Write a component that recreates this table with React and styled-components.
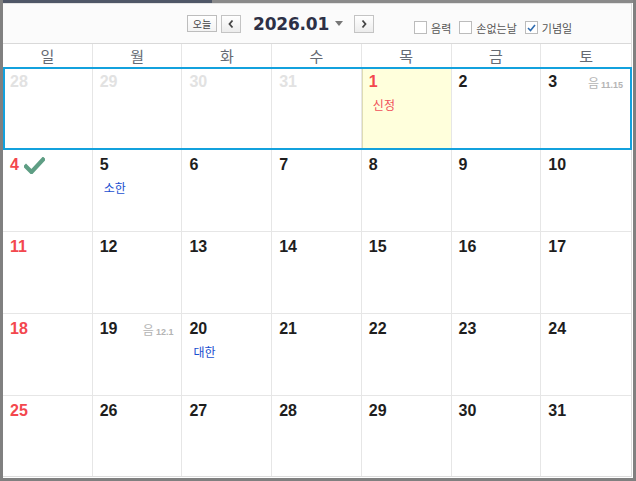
import styled, { createGlobalStyle } from "styled-components";

const GlobalStyle = createGlobalStyle`
  html, body {
    margin:0;
    padding:0;
    background:#fff;
    font-family:"Liberation Sans","Noto Sans CJK KR",sans-serif;
  }
`

const Frame = styled.div`
  box-sizing:border-box;
  width:636px;
  height:481px;
  display:flex;
  flex-direction:column;
  border:3px solid #808080;
  border-top:none;
  padding:0 1px 1px 0;
  background:#fff;
`

const TopStrip = styled.div`
  height:3px;
  margin-right:-1px;
  background:linear-gradient(to right, #4f5767 209px, #8a8a8a 209px);
`

const Inner = styled.div`
  flex:1;
  display:flex;
  flex-direction:column;
  border-right:1px solid #dcdcdc;
  border-bottom:1px solid #dcdcdc;
`

const Toolbar = styled.div`
  box-sizing:border-box;
  height:41px;
  display:flex;
  align-items:center;
  padding-left:184px;
  background:#fbfbfb;
  border-top:1px solid #e4e4e4;
  border-bottom:1px solid #d9d9d9;
`

const TodayButton = styled.button`
  box-sizing:border-box;
  width:30px;
  height:17px;
  padding:0;
  border:1px solid #bdbdbd;
  background:linear-gradient(#fff,#f3f3f3);
  font-family:"Noto Sans CJK KR",sans-serif;
  font-size:10px;
  line-height:14px;
  color:#444;
  margin-right:4px;
`

const ArrowButton = styled.button`
  box-sizing:border-box;
  width:20px;
  height:18px;
  padding:0;
  display:flex;
  align-items:center;
  justify-content:center;
  border:1px solid #c4c4c4;
  background:linear-gradient(#fff,#ececec);
  margin-left:${({$ml}) => $ml || 0}px;
`

const Title = styled.div`
  margin-left:12px;
  font-family:"DejaVu Sans",sans-serif;
  font-weight:bold;
  font-size:17px;
  color:#2d3046;
  letter-spacing:-0.2px;
`

const Caret = styled.span`
  margin-left:6px;
  width:0;
  height:0;
  border-left:4px solid transparent;
  border-right:4px solid transparent;
  border-top:5px solid #777;
`

const Options = styled.div`
  display:flex;
  align-items:center;
  gap:8px;
  margin-left:40px;
  margin-top:8px;
`

const Option = styled.label`
  display:flex;
  align-items:center;
  gap:4px;
  font-family:"Noto Sans CJK KR",sans-serif;
  font-size:11px;
  color:#555;
`

const Box = styled.span`
  box-sizing:border-box;
  width:13px;
  height:13px;
  border:1px solid #bcbcbc;
  background:#fff;
  display:flex;
  align-items:center;
  justify-content:center;
`

const DayNames = styled.div`
  box-sizing:border-box;
  height:23px;
  display:grid;
  grid-template-columns:repeat(7,1fr);
  background:#fff;
`

const DayName = styled.div`
  display:flex;
  align-items:center;
  justify-content:center;
  font-family:"Noto Sans CJK KR",sans-serif;
  font-size:15px;
  color:#656a73;
  border-right:${({$last}) => $last ? "none" : "1px solid #e6e6e6"};
`

const Week = styled.div`
  position:relative;
  height:${({$h}) => $h}px;
  flex:${({$fill}) => $fill ? 1 : "none"};
  display:grid;
  grid-template-columns:repeat(7,1fr);
  ${({$selected}) => $selected && `
    &::after {
      content:"";
      position:absolute;
      inset:0 -1px 0 0;
      border:2px solid #13a1dd;
      pointer-events:none;
    }
  `}
`

const Cell = styled.div`
  box-sizing:border-box;
  padding:6px 8px 0 7px;
  border-right:${({$last}) => $last ? "none" : "1px solid #e6e6e6"};
  border-bottom:${({$lastRow}) => $lastRow ? "none" : "1px solid #e6e6e6"};
  background:${({$today}) => $today ? "#ffffdc" : "#fff"};
  box-shadow:${({$today}) => $today ? "inset 1px 0 0 #dedcb4" : "none"};
`

const Head = styled.div`
  display:flex;
  align-items:center;
  justify-content:space-between;
`

const NumberWrap = styled.div`
  display:flex;
  align-items:center;
  gap:5px;
`

const Num = styled.span`
  font-weight:bold;
  font-size:16px;
  line-height:18px;
  color:${({$tone}) => $tone === "other" ? "#e2e2e2" : $tone === "sun" ? "#f3474e" : "#1e1e1e"};
`

const Lunar = styled.span`
  display:flex;
  align-items:baseline;
  gap:2px;
  color:#b4b4b4;
  font-family:"Noto Sans CJK KR",sans-serif;
  font-size:12px;
  b {
    font-family:"Liberation Sans",sans-serif;
    font-size:9px;
    font-weight:bold;
  }
`

const Label = styled.div`
  margin:5px 0 0 4px;
  font-family:"Noto Sans CJK KR",sans-serif;
  font-size:12px;
  color:${({$red}) => $red ? "#f0505a" : "#1a4fd0"};
`

const weeks = [
  [
    {d:28, tone:"other"}, {d:29, tone:"other"}, {d:30, tone:"other"}, {d:31, tone:"other"},
    {d:1, tone:"sun", today:true, label:"신정", red:true}, {d:2}, {d:3, lunar:"11.15"},
  ],
  [
    {d:4, tone:"sun", check:true}, {d:5, label:"소한"}, {d:6}, {d:7}, {d:8}, {d:9}, {d:10},
  ],
  [
    {d:11, tone:"sun"}, {d:12}, {d:13}, {d:14}, {d:15}, {d:16}, {d:17},
  ],
  [
    {d:18, tone:"sun"}, {d:19, lunar:"12.1"}, {d:20, label:"대한"}, {d:21}, {d:22}, {d:23}, {d:24},
  ],
  [
    {d:25, tone:"sun"}, {d:26}, {d:27}, {d:28}, {d:29}, {d:30}, {d:31},
  ],
]

const names = ["일","월","화","수","목","금","토"]

const Chevron = ({dir}) => (
  <svg width="8" height="10" viewBox="0 0 8 10">
    <path
      d={dir === "left" ? "M5.5 1.5 L2.5 5 L5.5 8.5" : "M2.5 1.5 L5.5 5 L2.5 8.5"}
      fill="none"
      stroke="#444"
      strokeWidth="1.8"
    />
  </svg>
)

const Check = () => (
  <svg width="21" height="17" viewBox="0 0 21 17">
    <path d="M2 9.5 L7.5 15 L19 2.5" fill="none" stroke="#5e9e84" strokeWidth="4.2" strokeLinecap="square" />
  </svg>
)

const CheckOption = ({label, checked}) => (
  <Option>
    <Box>
      {checked && (
        <svg width="9" height="8" viewBox="0 0 9 8">
          <path d="M1 4 L3.5 6.5 L8 1" fill="none" stroke="#2f6cb0" strokeWidth="1.6" />
        </svg>
      )}
    </Box>
    {label}
  </Option>
)

const App = () => {
  return (
    <Frame>
      <GlobalStyle />
      <TopStrip />
      <Inner>
        <Toolbar>
          <TodayButton>오늘</TodayButton>
          <ArrowButton><Chevron dir="left" /></ArrowButton>
          <Title>2026.01</Title>
          <Caret />
          <ArrowButton $ml={11}><Chevron dir="right" /></ArrowButton>
          <Options>
            <CheckOption label="음력" />
            <CheckOption label="손없는날" />
            <CheckOption label="기념일" checked />
          </Options>
        </Toolbar>
        <DayNames>
          {names.map((n, i) => (
            <DayName key={n} $last={i === 6}>{n}</DayName>
          ))}
        </DayNames>
        {weeks.map((week, wi) => (
          <Week
            key={wi}
            $selected={wi === 0}
            $h={wi === 0 ? 83 : 82}
            $fill={wi === weeks.length - 1}
          >
            {week.map((day, di) => (
              <Cell key={di} $last={di === 6} $lastRow={wi === weeks.length - 1} $today={day.today}>
                <Head>
                  <NumberWrap>
                    <Num $tone={day.tone}>{day.d}</Num>
                    {day.check && <Check />}
                  </NumberWrap>
                  {day.lunar && <Lunar>음<b>{day.lunar}</b></Lunar>}
                </Head>
                {day.label && <Label $red={day.red}>{day.label}</Label>}
              </Cell>
            ))}
          </Week>
        ))}
      </Inner>
    </Frame>
  )
}

export default App
